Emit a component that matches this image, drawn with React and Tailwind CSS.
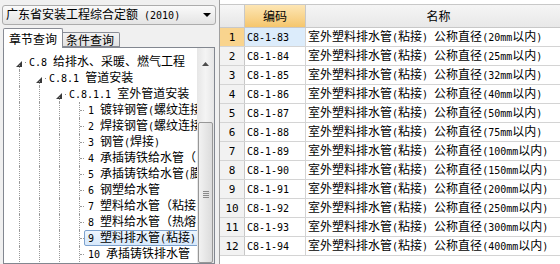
import React from "react";

function Mixed({ text, mono = "text-[10px]" }) {
  const parts = [];
  let cur = "";
  let isA = null;
  for (const ch of text) {
    const a = ch.charCodeAt(0) < 128;
    if (isA === null || a === isA) {
      cur += ch;
      isA = a;
    } else {
      parts.push([isA, cur]);
      cur = ch;
      isA = a;
    }
  }
  if (cur) parts.push([isA, cur]);
  return (
    <span className="whitespace-pre leading-[14px]">
      {parts.map(([a, s], i) =>
        a ? (
          <span key={i} className={"font-['DejaVu_Sans_Mono',monospace] " + mono}>
            {s}
          </span>
        ) : (
          <span key={i}>{s}</span>
        )
      )}
    </span>
  );
}

function Tri() {
  return (
    <svg width="6" height="6" viewBox="0 0 6 6" className="block">
      <polygon points="6,0 6,6 0,6" fill="#3a3a3a" />
    </svg>
  );
}

const treeNodes = [
  { level: 0, text: "C.8 给排水、采暖、燃气工程" },
  { level: 1, text: "C.8.1 管道安装" },
  { level: 2, text: "C.8.1.1 室外管道安装" },
];

const leaves = [
  "1 镀锌钢管(螺纹连接",
  "2 焊接钢管(螺纹连接",
  "3 钢管(焊接)",
  "4 承插铸铁给水管（",
  "5 承插铸铁给水管(膨",
  "6 钢塑给水管",
  "7 塑料给水管（粘接",
  "8 塑料给水管（热熔",
  "9 塑料排水管(粘接)",
  "10 承插铸铁排水管（",
];

function VLine() {
  return (
    <span className="w-[20px] h-full shrink-0 flex">
      <span className="ml-[15px] h-full border-l border-dotted border-[#9a9a9a]" />
    </span>
  );
}

function NodeRow({ level, text }) {
  const anc = [];
  for (let i = 0; i < level; i++) anc.push(<VLine key={i} />);
  return (
    <div className="flex h-[16px] items-center">
      {anc}
      <span className="w-[20px] h-full shrink-0 flex flex-col">
        <span className="flex-1 flex items-end">
          <span className="ml-[12px] mb-[-2px]">
            <Tri />
          </span>
        </span>
        <span className="h-[5px] ml-[15px] border-l border-dotted border-[#9a9a9a]" />
      </span>
      <span className="w-[5px] h-full shrink-0 flex items-center">
        <span className="ml-[1px] w-[1px] h-[1px] bg-[#8a8a8a]" />
      </span>
      <Mixed text={text} />
    </div>
  );
}

function LeafRow({ text, selected }) {
  return (
    <div className="flex h-[16px] items-center">
      <VLine />
      <VLine />
      <VLine />
      <span className="w-[20px] h-full shrink-0 flex items-center">
        <span className="ml-[15px] h-full border-l border-dotted border-[#9a9a9a]" />
        <span className="w-[4px] border-t border-dotted border-[#9a9a9a]" />
      </span>
      <span
        className={
          "h-[16px] flex items-center pl-[3px] pr-[2px] border rounded-[2px] " +
          (selected
            ? "border-[#7da2ce] bg-gradient-to-b from-[#eef6fe] to-[#d6e8fb]"
            : "border-transparent")
        }
      >
        <Mixed text={text} />
      </span>
    </div>
  );
}

function ScrollBar() {
  return (
    <div className="w-[17px] shrink-0 h-full bg-gradient-to-r from-[#e6e6e6] via-[#f4f4f4] to-[#e6e6e6] flex flex-col">
      <div className="h-[17px] flex items-center justify-center mt-[7px]">
        <svg width="7" height="4" viewBox="0 0 7 4">
          <polygon points="0,4 7,4 3.5,0" fill="#4d4d4d" />
        </svg>
      </div>
      <div className="h-[50px]" />
      <div className="flex-1 mx-[1px] border border-[#979797] rounded-[2px] bg-gradient-to-r from-[#f2f2f2] to-[#dcdcdc] flex flex-col items-center pt-[68px]">
        <div className="w-[6px] flex flex-col gap-[1px]">
          <div className="h-[1px] bg-[#8b8b8b]" />
          <div className="h-[1px] bg-[#8b8b8b]" />
          <div className="h-[1px] bg-[#8b8b8b]" />
          <div className="h-[1px] bg-[#8b8b8b]" />
        </div>
      </div>
    </div>
  );
}

function LeftPane() {
  return (
    <div className="w-[216px] shrink-0 flex flex-col pl-[2px] pt-[5px]">
      <div className="h-[20px] w-[214px] shrink-0 border border-[#acacac] rounded-[3px] bg-gradient-to-b from-[#fafafa] to-[#e4e4e4] flex items-center pl-[3px] pr-[4px]">
        <span className="flex-1">
          <Mixed text="广东省安装工程综合定额 (2010)" />
        </span>
        <svg width="8" height="4" viewBox="0 0 8 4" className="block">
          <polygon points="0,0 8,0 4,4" fill="#000" />
        </svg>
      </div>
      <div className="mt-[3px] h-[19px] shrink-0 flex items-end pl-[1px]">
        <div className="relative z-10 h-[20px] w-[60px] mb-[-1px] border border-b-0 border-[#898c95] bg-white flex items-center pl-[5px] rounded-t-[2px]">
          章节查询
        </div>
        <div className="h-[15px] w-[57px] border border-l-0 border-[#898c95] bg-gradient-to-b from-[#f3f3f3] to-[#e2e2e2] flex items-center pl-[3px] rounded-tr-[2px]">
          条件查询
        </div>
      </div>
      <div className="ml-[1px] w-[212px] flex-1 border border-[#828790] bg-white flex overflow-hidden">
        <div className="flex-1 overflow-hidden pt-[6px]">
          {treeNodes.map((n, i) => (
            <NodeRow key={i} level={n.level} text={n.text} />
          ))}
          {leaves.map((t, i) => (
            <LeafRow key={i} text={t} selected={i === 8} />
          ))}
        </div>
        <ScrollBar />
      </div>
    </div>
  );
}

const rows = [20, 25, 32, 40, 50, 75, 100, 150, 200, 250, 300, 400].map((d, i) => ({
  n: i + 1,
  code: "C8-1-" + (83 + i),
  name: "室外塑料排水管(粘接) 公称直径(" + d + "mm以内)",
}));

function RightPane() {
  return (
    <div className="ml-[3px] flex-1 min-w-0 h-full border-l border-[#a0a0a0] bg-white pt-[4px] overflow-hidden">
      <div className="w-[360px]">
        <div className="flex h-[24px] border-b border-t border-[#c8c8c8]">
          <div className="w-[25px] shrink-0 border-r border-[#c8c8c8] bg-gradient-to-b from-[#f7f7f7] to-[#e6e6e6]" />
          <div className="w-[61px] shrink-0 border-r border-[#c8c8c8] bg-gradient-to-b from-[#fde6b4] to-[#f5c66c] flex items-center justify-center">
            编码
          </div>
          <div className="w-[266px] shrink-0 border-r border-[#c8c8c8] bg-gradient-to-b from-[#f5f5f5] to-[#e8e8e8] flex items-center justify-center">
            名称
          </div>
        </div>
        {rows.map((r) => (
          <div key={r.n} className="flex h-[19px] border-b border-[#d4d4d4]">
            <div
              className={
                "w-[25px] shrink-0 border-r border-[#c8c8c8] flex items-center justify-center " +
                (r.n === 1 ? "bg-[#f9d48e]" : "bg-[#f2f2f2]")
              }
            >
              <Mixed text={String(r.n)} mono="text-[11px]" />
            </div>
            <div
              className={
                "w-[61px] shrink-0 border-r border-[#d4d4d4] flex items-center pl-[2px] " +
                (r.n === 1 ? "bg-[#dcecfb]" : "")
              }
            >
              <Mixed text={r.code} />
            </div>
            <div className="w-[266px] shrink-0 flex items-center pl-[2px]">
              <Mixed text={r.name} />
            </div>
          </div>
        ))}
      </div>
    </div>
  );
}

export default function App() {
  return (
    <div className="w-[560px] h-[264px] bg-[#f0f0f0] flex overflow-hidden text-[12px] leading-none text-black font-['Noto_Sans_CJK_SC',sans-serif]">
      <LeftPane />
      <RightPane />
    </div>
  );
}
